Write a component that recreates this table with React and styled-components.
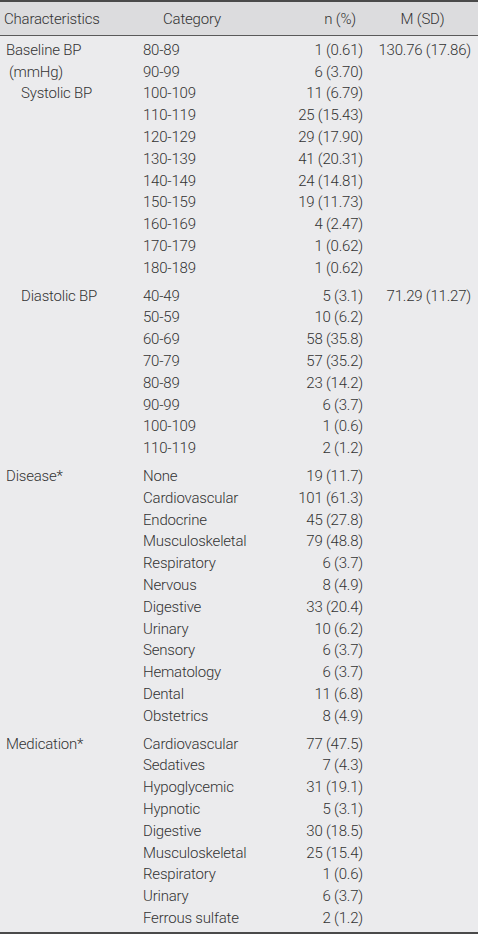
import React from "react";
import styled, { createGlobalStyle } from "styled-components";

const Global = createGlobalStyle`
  html, body { margin: 0; padding: 0; background: #ebebed; }
  body { font-family: Roboto, "Liberation Sans", Arial, sans-serif; }
`;

const Table = styled.div`
  width: 478px;
  background: #ebebed;
  color: #333;
  font-size: 15px;
  font-weight: 300;
  letter-spacing: -0.2px;
  border-top: 2px solid #4a4a4a;
  border-bottom: 2px solid #4a4a4a;
`;

const cols = "138px 120px 105px 115px";

const Header = styled.div`
  display: grid;
  grid-template-columns: ${cols};
  height: 33px;
  align-items: center;
  background: #dcdcde;
  border-bottom: 1px solid #5a5a5a;
`;

const HeadCell = styled.div`
  text-align: ${(p) => p.$align || "left"};
  padding-left: ${(p) => p.$pl || 0}px;
  padding-right: ${(p) => p.$pr || 0}px;
`;

const Group = styled.div`
  padding: 3px 0;
`;

const Row = styled.div`
  display: grid;
  grid-template-columns: ${cols};
  height: 21.8px;
  align-items: center;
  white-space: nowrap;
`;

const Label = styled.div`
  padding-left: ${(p) => p.$indent || 6}px;
`;

const Cat = styled.div`
  padding-left: 5px;
`;

const Num = styled.div`
  text-align: right;
`;

const Stat = styled.div`
  text-align: right;
  padding-right: 7px;
`;

const groups = [
  {
    labels: [
      ["Baseline BP", 6],
      ["(mmHg)", 9],
      ["Systolic BP", 21],
    ],
    stat: "130.76 (17.86)",
    rows: [
      ["80-89", "1 (0.61)"],
      ["90-99", "6 (3.70)"],
      ["100-109", "11 (6.79)"],
      ["110-119", "25 (15.43)"],
      ["120-129", "29 (17.90)"],
      ["130-139", "41 (20.31)"],
      ["140-149", "24 (14.81)"],
      ["150-159", "19 (11.73)"],
      ["160-169", "4 (2.47)"],
      ["170-179", "1 (0.62)"],
      ["180-189", "1 (0.62)"],
    ],
  },
  {
    labels: [["Diastolic BP", 21]],
    stat: "71.29 (11.27)",
    rows: [
      ["40-49", "5 (3.1)"],
      ["50-59", "10 (6.2)"],
      ["60-69", "58 (35.8)"],
      ["70-79", "57 (35.2)"],
      ["80-89", "23 (14.2)"],
      ["90-99", "6 (3.7)"],
      ["100-109", "1 (0.6)"],
      ["110-119", "2 (1.2)"],
    ],
  },
  {
    labels: [["Disease*", 6]],
    rows: [
      ["None", "19 (11.7)"],
      ["Cardiovascular", "101 (61.3)"],
      ["Endocrine", "45 (27.8)"],
      ["Musculoskeletal", "79 (48.8)"],
      ["Respiratory", "6 (3.7)"],
      ["Nervous", "8 (4.9)"],
      ["Digestive", "33 (20.4)"],
      ["Urinary", "10 (6.2)"],
      ["Sensory", "6 (3.7)"],
      ["Hematology", "6 (3.7)"],
      ["Dental", "11 (6.8)"],
      ["Obstetrics", "8 (4.9)"],
    ],
  },
  {
    labels: [["Medication*", 6]],
    rows: [
      ["Cardiovascular", "77 (47.5)"],
      ["Sedatives", "7 (4.3)"],
      ["Hypoglycemic", "31 (19.1)"],
      ["Hypnotic", "5 (3.1)"],
      ["Digestive", "30 (18.5)"],
      ["Musculoskeletal", "25 (15.4)"],
      ["Respiratory", "1 (0.6)"],
      ["Urinary", "6 (3.7)"],
      ["Ferrous sulfate", "2 (1.2)"],
    ],
  },
];

export default function App() {
  return (
    <>
      <Global />
      <Table>
        <Header>
          <HeadCell $pl={4}>Characteristics</HeadCell>
          <HeadCell $pl={25}>Category</HeadCell>
          <HeadCell $align="right" $pr={7}>n (%)</HeadCell>
          <HeadCell $align="center" $pl={4}>M (SD)</HeadCell>
        </Header>
        {groups.map((g, gi) => (
          <Group key={gi}>
            {g.rows.map((r, ri) => (
              <Row key={ri}>
                <Label $indent={g.labels[ri] ? g.labels[ri][1] : 6}>
                  {g.labels[ri] ? g.labels[ri][0] : ""}
                </Label>
                <Cat>{r[0]}</Cat>
                <Num>{r[1]}</Num>
                <Stat>{ri === 0 && g.stat ? g.stat : ""}</Stat>
              </Row>
            ))}
          </Group>
        ))}
      </Table>
    </>
  );
}
